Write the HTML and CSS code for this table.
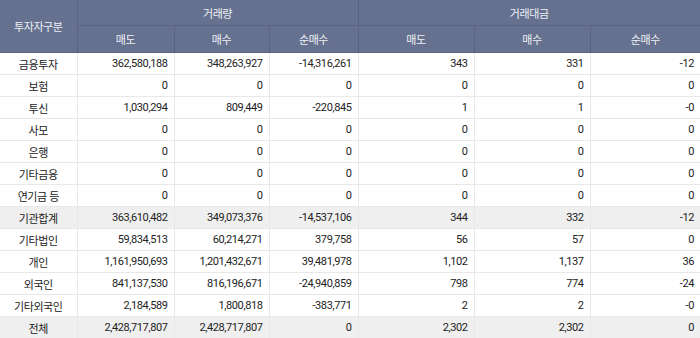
FILE: index.html
```html
<!DOCTYPE html>
<html lang="ko">
<head>
    <meta charset="UTF-8">
    <title>투자자별 매매동향</title>
    <link rel="stylesheet" href="styles.css">
</head>
<body>
    <table class="grid">
        <colgroup>
            <col class="c-name">
            <col class="c-v1">
            <col class="c-v2">
            <col class="c-v3">
            <col class="c-a1">
            <col class="c-a2">
            <col class="c-a3">
        </colgroup>
        <thead>
            <tr class="h1">
                <th rowspan="2">투자자구분</th>
                <th colspan="3">거래량</th>
                <th colspan="3">거래대금</th>
            </tr>
            <tr class="h2">
                <th>매도</th>
                <th>매수</th>
                <th>순매수</th>
                <th>매도</th>
                <th>매수</th>
                <th>순매수</th>
            </tr>
        </thead>
        <tbody>
            <tr><td>금융투자</td><td>362,580,188</td><td>348,263,927</td><td>-14,316,261</td><td>343</td><td>331</td><td>-12</td></tr>
            <tr><td>보험</td><td>0</td><td>0</td><td>0</td><td>0</td><td>0</td><td>0</td></tr>
            <tr><td>투신</td><td>1,030,294</td><td>809,449</td><td>-220,845</td><td>1</td><td>1</td><td>-0</td></tr>
            <tr><td>사모</td><td>0</td><td>0</td><td>0</td><td>0</td><td>0</td><td>0</td></tr>
            <tr><td>은행</td><td>0</td><td>0</td><td>0</td><td>0</td><td>0</td><td>0</td></tr>
            <tr><td>기타금융</td><td>0</td><td>0</td><td>0</td><td>0</td><td>0</td><td>0</td></tr>
            <tr><td>연기금 등</td><td>0</td><td>0</td><td>0</td><td>0</td><td>0</td><td>0</td></tr>
            <tr class="sum"><td>기관합계</td><td>363,610,482</td><td>349,073,376</td><td>-14,537,106</td><td>344</td><td>332</td><td>-12</td></tr>
            <tr><td>기타법인</td><td>59,834,513</td><td>60,214,271</td><td>379,758</td><td>56</td><td>57</td><td>0</td></tr>
            <tr><td>개인</td><td>1,161,950,693</td><td>1,201,432,671</td><td>39,481,978</td><td>1,102</td><td>1,137</td><td>36</td></tr>
            <tr><td>외국인</td><td>841,137,530</td><td>816,196,671</td><td>-24,940,859</td><td>798</td><td>774</td><td>-24</td></tr>
            <tr><td>기타외국인</td><td>2,184,589</td><td>1,800,818</td><td>-383,771</td><td>2</td><td>2</td><td>-0</td></tr>
            <tr class="sum"><td>전체</td><td>2,428,717,807</td><td>2,428,717,807</td><td>0</td><td>2,302</td><td>2,302</td><td>0</td></tr>
        </tbody>
    </table>
</body>
</html>
```

FILE: styles.css
```css
body {
    margin: 0;
    font-family: Roboto, "Noto Sans CJK KR", sans-serif;
    font-size: 11px;
    letter-spacing: -0.4px;
    color: #222;
    background: #fff;
}
.grid {
    width: 700px;
    border-collapse: collapse;
    table-layout: fixed;
}
.c-name { width: 77px; }
.c-v1 { width: 97px; }
.c-v2 { width: 95px; }
.c-v3 { width: 89px; }
.c-a1 { width: 116px; }
.c-a2 { width: 116px; }
.c-a3 { width: 110px; }
th {
    background-color: #66718f;
    color: #eef0f5;
    font-weight: normal;
    border: 1px solid #5a6480;
    padding: 0;
}
.grid tr:first-child th {
    border-top: none;
}
.grid th:first-child,
.grid td:first-child {
    border-left: none;
}
.grid th:last-child,
.grid td:last-child {
    border-right: none;
}
.h1 th {
    height: 25px;
}
.h2 th {
    height: 26px;
}
td {
    height: 21px;
    padding: 0 6px 0 0;
    text-align: right;
    border: 1px solid #e8e8e8;
    white-space: nowrap;
}
td:first-child {
    text-align: center;
    padding: 0;
}
.sum td {
    background-color: #efefef;
}
```
